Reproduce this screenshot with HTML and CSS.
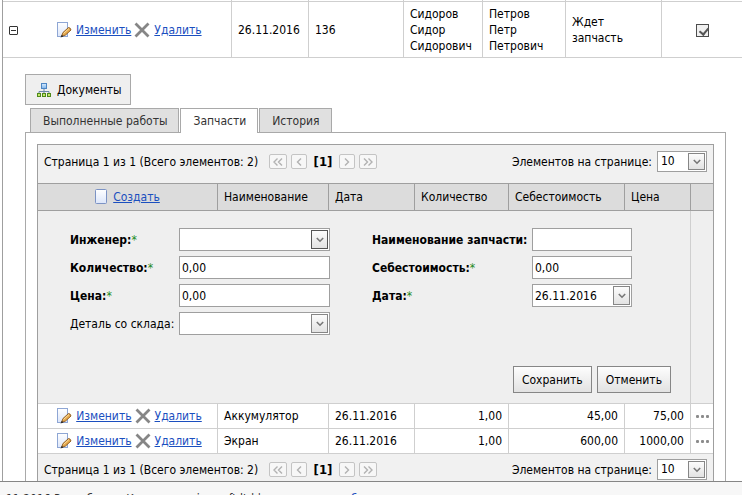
FILE: index.html
```html
<!DOCTYPE html>
<html lang="ru">
<head>
<meta charset="utf-8">
<title>Запчасти</title>
<link rel="stylesheet" href="styles.css">
</head>
<body>
<svg class="sprites" aria-hidden="true">
  <defs>
    <linearGradient id="paper" x1="0" y1="0" x2="0" y2="1"><stop offset="0" stop-color="#ffffff"/><stop offset="1" stop-color="#dce6fa"/></linearGradient>
    <linearGradient id="screen" x1="0" y1="0" x2="0" y2="1"><stop offset="0" stop-color="#d8ecff"/><stop offset="1" stop-color="#7fb4ea"/></linearGradient>
  </defs>
  <symbol id="edit" viewBox="0 0 16 16">
    <rect x="1.5" y=".5" width="10" height="14" fill="url(#paper)" stroke="#8ea6d4"/>
    <path d="M5.500 14.500 L7 10.500 L12.500 5.500 Q14.500 5.500 15 8 L9.500 13 Z" fill="#e6a94c" stroke="#8a5518" stroke-width=".9"/>
    <path d="M7.500 11.500 L13 6.500" stroke="#fbe0a4" stroke-width="1"/>
    <path d="M4.500 15.500 L5.800 12.800 L7.500 14.500 Z" fill="#2c2c2c"/>
  </symbol>
  <symbol id="remove" viewBox="0 0 16 16"><path d="M1.500 1.500 L14.500 14.500 M14.500 1.500 L1.500 14.500" stroke="#868686" stroke-width="2.800"/></symbol>
  <symbol id="page" viewBox="0 0 12 16"><rect x=".5" y=".5" width="11" height="14" rx="1" fill="url(#paper)" stroke="#7c93c4"/></symbol>
  <symbol id="tree" viewBox="0 0 16 16">
    <rect x="5.500" y="1.500" width="5" height="5" fill="url(#screen)" stroke="#4e86c4"/>
    <path d="M8 7 V11 M3 11 V9.500 H13 V11" fill="none" stroke="#6a87a8"/>
    <g fill="#c5e86c" stroke="#4f8a1c"><rect x="1.500" y="11.500" width="3" height="3"/><rect x="6.500" y="11.500" width="3" height="3"/><rect x="11.500" y="11.500" width="3" height="3"/></g>
  </symbol>
  <symbol id="first" viewBox="0 0 10 8"><path d="M4.500 .5 L1 4 L4.500 7.500 M9 .5 L5.500 4 L9 7.500" fill="none" stroke="#b2b2b2" stroke-width="1.400"/></symbol>
  <symbol id="prev" viewBox="0 0 6 8"><path d="M5 .5 L1.500 4 L5 7.500" fill="none" stroke="#b2b2b2" stroke-width="1.400"/></symbol>
  <symbol id="next" viewBox="0 0 6 8"><path d="M1 .5 L4.500 4 L1 7.500" fill="none" stroke="#b2b2b2" stroke-width="1.400"/></symbol>
  <symbol id="last" viewBox="0 0 10 8"><path d="M1 .5 L4.500 4 L1 7.500 M5.500 .5 L9 4 L5.500 7.500" fill="none" stroke="#b2b2b2" stroke-width="1.400"/></symbol>
  <symbol id="down" viewBox="0 0 8 6"><path d="M.8 1 L4 4.200 L7.200 1" fill="none" stroke="#777" stroke-width="1.600"/></symbol>
</svg>

<main class="content">
  <div class="orders">
    <table class="order-table">
      <colgroup><col class="c-cmd"><col class="c-date"><col class="c-num"><col class="c-client"><col class="c-master"><col class="c-state"><col></colgroup>
      <tbody>
        <tr class="stub"><td></td><td></td><td></td><td></td><td></td><td></td><td></td></tr>
        <tr>
          <td>
            <div class="order-commands">
              <button class="collapse" type="button" aria-label="Свернуть"></button>
              <div class="commands">
                <svg class="icon"><use href="#edit"/></svg><a href="#">Изменить</a>
                <svg class="icon"><use href="#remove"/></svg><a href="#">Удалить</a>
              </div>
            </div>
          </td>
          <td>26.11.2016</td>
          <td>136</td>
          <td>Сидоров Сидор Сидорович</td>
          <td>Петров Петр Петрович</td>
          <td>Ждет запчасть</td>
          <td class="center"><input class="check" type="checkbox" checked aria-label="Готово"></td>
        </tr>
      </tbody>
    </table>

    <section class="detail">
      <button class="documents" type="button"><svg class="icon"><use href="#tree"/></svg>Документы</button>
      <nav class="tabs">
        <button class="tab" type="button">Выполненные работы</button>
        <button class="tab active" type="button">Запчасти</button>
        <button class="tab" type="button">История</button>
      </nav>
      <div class="panel">
        <div class="grid">
          <div class="pager">
            <span class="summary">Страница 1 из 1 (Всего элементов: 2)</span>
            <button class="nav wide" type="button" disabled aria-label="Первая"><svg><use href="#first"/></svg></button>
            <button class="nav" type="button" disabled aria-label="Предыдущая"><svg><use href="#prev"/></svg></button>
            <b class="current">[1]</b>
            <button class="nav" type="button" disabled aria-label="Следующая"><svg><use href="#next"/></svg></button>
            <button class="nav wide" type="button" disabled aria-label="Последняя"><svg><use href="#last"/></svg></button>
            <label class="size-label" for="size-top">Элементов на странице:</label>
            <span class="combo size"><select id="size-top"><option>10</option></select><span class="arrow"><svg><use href="#down"/></svg></span></span>
          </div>

          <table class="parts">
            <colgroup><col class="p-cmd"><col><col class="p-date"><col class="p-qty"><col class="p-cost"><col class="p-price"><col class="p-more"></colgroup>
            <thead>
              <tr>
                <th><div class="commands create"><svg class="icon page"><use href="#page"/></svg><a href="#">Создать</a></div></th>
                <th>Наименование</th><th>Дата</th><th>Количество</th><th>Себестоимость</th><th>Цена</th><th></th>
              </tr>
            </thead>
            <tbody>
              <tr class="edit-row">
                <td colspan="6">
                  <form class="form">
                    <div class="fields">
                      <label for="engineer"><b>Инженер:</b><i>*</i></label>
                      <span class="combo"><select id="engineer"><option></option></select><span class="arrow active"><svg><use href="#down"/></svg></span></span>
                      <label for="part"><b>Наименование запчасти:</b></label>
                      <input id="part" type="text">
                      <label for="qty"><b>Количество:</b><i>*</i></label>
                      <input id="qty" type="text" value="0,00">
                      <label for="cost"><b>Себестоимость:</b><i>*</i></label>
                      <input id="cost" type="text" value="0,00">
                      <label for="price"><b>Цена:</b><i>*</i></label>
                      <input id="price" type="text" value="0,00">
                      <label for="date"><b>Дата:</b><i>*</i></label>
                      <span class="combo"><select id="date"><option>26.11.2016</option></select><span class="arrow"><svg><use href="#down"/></svg></span></span>
                      <label for="stock">Деталь со склада:</label>
                      <span class="combo"><select id="stock"><option></option></select><span class="arrow"><svg><use href="#down"/></svg></span></span>
                    </div>
                    <div class="actions">
                      <button type="button">Сохранить</button>
                      <button type="button">Отменить</button>
                    </div>
                  </form>
                </td>
                <td></td>
              </tr>
              <tr>
                <td><div class="commands"><svg class="icon"><use href="#edit"/></svg><a href="#">Изменить</a> <svg class="icon"><use href="#remove"/></svg><a href="#">Удалить</a></div></td>
                <td>Аккумулятор</td><td>26.11.2016</td><td class="number">1,00</td><td class="number">45,00</td><td class="number">75,00</td>
                <td class="more"><button type="button" aria-label="Ещё"><span></span><span></span><span></span></button></td>
              </tr>
              <tr>
                <td><div class="commands"><svg class="icon"><use href="#edit"/></svg><a href="#">Изменить</a> <svg class="icon"><use href="#remove"/></svg><a href="#">Удалить</a></div></td>
                <td>Экран</td><td>26.11.2016</td><td class="number">1,00</td><td class="number">600,00</td><td class="number">1000,00</td>
                <td class="more"><button type="button" aria-label="Ещё"><span></span><span></span><span></span></button></td>
              </tr>
            </tbody>
          </table>

          <div class="pager bottom">
            <span class="summary">Страница 1 из 1 (Всего элементов: 2)</span>
            <button class="nav wide" type="button" disabled aria-label="Первая"><svg><use href="#first"/></svg></button>
            <button class="nav" type="button" disabled aria-label="Предыдущая"><svg><use href="#prev"/></svg></button>
            <b class="current">[1]</b>
            <button class="nav" type="button" disabled aria-label="Следующая"><svg><use href="#next"/></svg></button>
            <button class="nav wide" type="button" disabled aria-label="Последняя"><svg><use href="#last"/></svg></button>
            <label class="size-label" for="size-bottom">Элементов на странице:</label>
            <span class="combo size"><select id="size-bottom"><option>10</option></select><span class="arrow"><svg><use href="#down"/></svg></span></span>
          </div>
        </div>
      </div>
    </section>
  </div>
</main>
<footer class="footer">11.2016 Разработка: Компания microsoft ltd | программное <a href="#">обеспечение</a></footer>
</body>
</html>
```

FILE: styles.css
```css
* { box-sizing: border-box; }

body {
  margin: 0;
  height: 100vh;
  display: flex;
  flex-direction: column;
  overflow: hidden;
  background: #fff;
  color: #000;
  font: 12px/16px "DejaVu Sans Condensed", "Noto Sans", sans-serif;
}

button, input, select { font: inherit; color: inherit; margin: 0; border-radius: 0; }
a { color: #1b4fbf; }
.sprites { position: absolute; width: 0; height: 0; }

.content { flex: 1; min-height: 0; overflow: hidden; padding-left: 2px; }
.orders { border-left: 1px solid #9f9f9f; }

/* Orders list */
.order-table { width: 100%; table-layout: fixed; border-collapse: separate; border-spacing: 0; }
.order-table td {
  height: 56px;
  padding: 4px 6px 3px;
  border: solid #cfcfcf;
  border-width: 0 0 1px 1px;
}
.order-table td:first-child { border-left: 0; padding-left: 6px; }
.order-table .stub td { height: 2px; padding: 0; }
.c-cmd { width: 228px; }
.c-date { width: 77px; }
.c-num { width: 95px; }
.c-client { width: 79px; }
.c-master { width: 83px; }
.c-state { width: 96px; }
.center { text-align: center; }

.order-commands { display: flex; align-items: center; gap: 38px; }
.commands { display: flex; align-items: center; justify-content: center; }
.commands a { margin: 0 3px 0 4px; }
.parts .commands { padding-left: 6px; }
.icon { width: 16px; height: 16px; flex: none; }
.icon.page { width: 12px; }
.commands.create a { margin: 0 6px; }

.collapse {
  width: 9px;
  height: 9px;
  padding: 0;
  border: 1px solid #333;
  border-radius: 1px;
  background: linear-gradient(#333, #333) center / 5px 1px no-repeat #fff;
}

.check {
  appearance: none;
  display: block;
  width: 13px;
  height: 13px;
  margin: 0 auto;
  border: 1px solid #4c4c4c;
  background: #f0f0f0;
}
.check:checked::before {
  content: "";
  display: block;
  width: 4px;
  height: 7px;
  margin: 1px 0 0 4px;
  border: solid #555;
  border-width: 0 2px 2px 0;
  transform: rotate(40deg);
}

/* Detail area */
.detail { padding: 16px 16px 16px 22px; }
.documents {
  display: flex;
  align-items: center;
  gap: 5px;
  height: 31px;
  padding: 0 8px 0 10px;
  border: 1px solid #a9a9a9;
  background: #efefef;
}
.tabs { display: flex; gap: 1px; padding: 3px 5px 0; }
.tab {
  height: 24px;
  padding: 0 11px 0 12px;
  border: 1px solid #a9a9a9;
  border-bottom: 0;
  background: #e0e0e0;
  color: #333;
}
.tab.active { background: #fff; height: 25px; margin-bottom: -1px; z-index: 1; }
.panel { border: 1px solid #a9a9a9; padding: 11px; }
.grid { border: 1px solid #9f9f9f; background: #efefef; }

.pager { display: flex; align-items: center; height: 38px; padding: 0 6px 5px; background: #f1f1f1; }
.pager.bottom { height: 36px; }
.summary { width: 217px; margin-right: 8px; white-space: nowrap; }
.nav {
  display: flex;
  align-items: center;
  justify-content: center;
  width: 16px;
  height: 15px;
  padding: 0;
  margin-right: 4px;
  border: 1px solid #c4c4c4;
  border-radius: 2px;
  background: #f7f7f7;
}
.nav svg { width: 6px; height: 8px; }
.nav.wide { width: 18px; }
.nav.wide svg { width: 10px; }
.current { width: 24px; margin-right: 4px; text-align: center; font-size: 13px; }
.size-label { margin-left: auto; margin-right: 5px; }

/* Parts grid */
.parts { width: 100%; table-layout: fixed; border-collapse: separate; border-spacing: 0; }
.p-cmd { width: 179px; }
.p-date { width: 86px; }
.p-qty { width: 94px; }
.p-cost { width: 116px; }
.p-price { width: 66px; }
.p-more { width: 23px; }
.parts th {
  height: 28px;
  padding: 0 6px;
  border: solid #9f9f9f;
  border-width: 1px 0 1px 1px;
  background: #dcdcdc;
  font-weight: normal;
  text-align: left;
}
.parts td {
  height: 25px;
  padding: 0 6px;
  border: solid #cfcfcf;
  border-width: 0 0 1px 1px;
  background: #fff;
  white-space: nowrap;
}
.parts th:first-child, .parts td:first-child { border-left: 0; }
.parts .edit-row td { height: 193px; padding: 0; background: #efefef; vertical-align: top; }
.parts .number { text-align: right; }
.parts .more { padding: 0; }
.more button { display: flex; justify-content: center; gap: 2px; width: 100%; padding: 0; border: 0; background: none; }
.more span { width: 3px; height: 3px; border-radius: 1px; background: #8c8c8c; }

/* Edit form */
.form { padding: 17px 19px 10px 32px; }
.fields { display: grid; grid-template-columns: 109px 151px 202px 100px; column-gap: 0; row-gap: 5px; align-items: center; }
.fields label:nth-of-type(even) { padding-left: 42px; }
.fields label { white-space: nowrap; }
.fields i { color: #1c8a1c; font-style: normal; }
.fields input {
  width: 100%;
  height: 23px;
  padding: 1px 2px 0;
  border: 1px solid #9f9f9f;
  background: #fff;
}
.combo { display: flex; position: relative; width: 100%; height: 23px; border: 1px solid #9f9f9f; background: #fff; }
.combo select { appearance: none; width: 100%; padding: 1px 2px 0; border: 0; background: none; }
.arrow {
  position: absolute;
  top: 1px;
  right: 1px;
  bottom: 1px;
  width: 17px;
  display: flex;
  align-items: center;
  justify-content: center;
  border: 1px solid #868686;
  background: linear-gradient(#fcfcfc, #e2e2e2);
  pointer-events: none;
}
.arrow.active { border-color: #555; }
.arrow svg { width: 8px; height: 6px; }
.combo.size { width: 50px; height: 21px; }
.combo.size select { padding: 0 3px 2px; }
.actions { display: flex; justify-content: flex-end; gap: 5px; margin-top: 31px; }
.actions button {
  height: 27px;
  padding: 0 8px;
  border: 1px solid #868686;
  background: linear-gradient(#fdfdfd, #e2e2e2);
}

.footer {
  height: 14px;
  overflow: hidden;
  padding: 9px 6px 0;
  border-top: 1px solid #868686;
  background: #f7f7f7;
  color: #333;
  white-space: nowrap;
}
```
